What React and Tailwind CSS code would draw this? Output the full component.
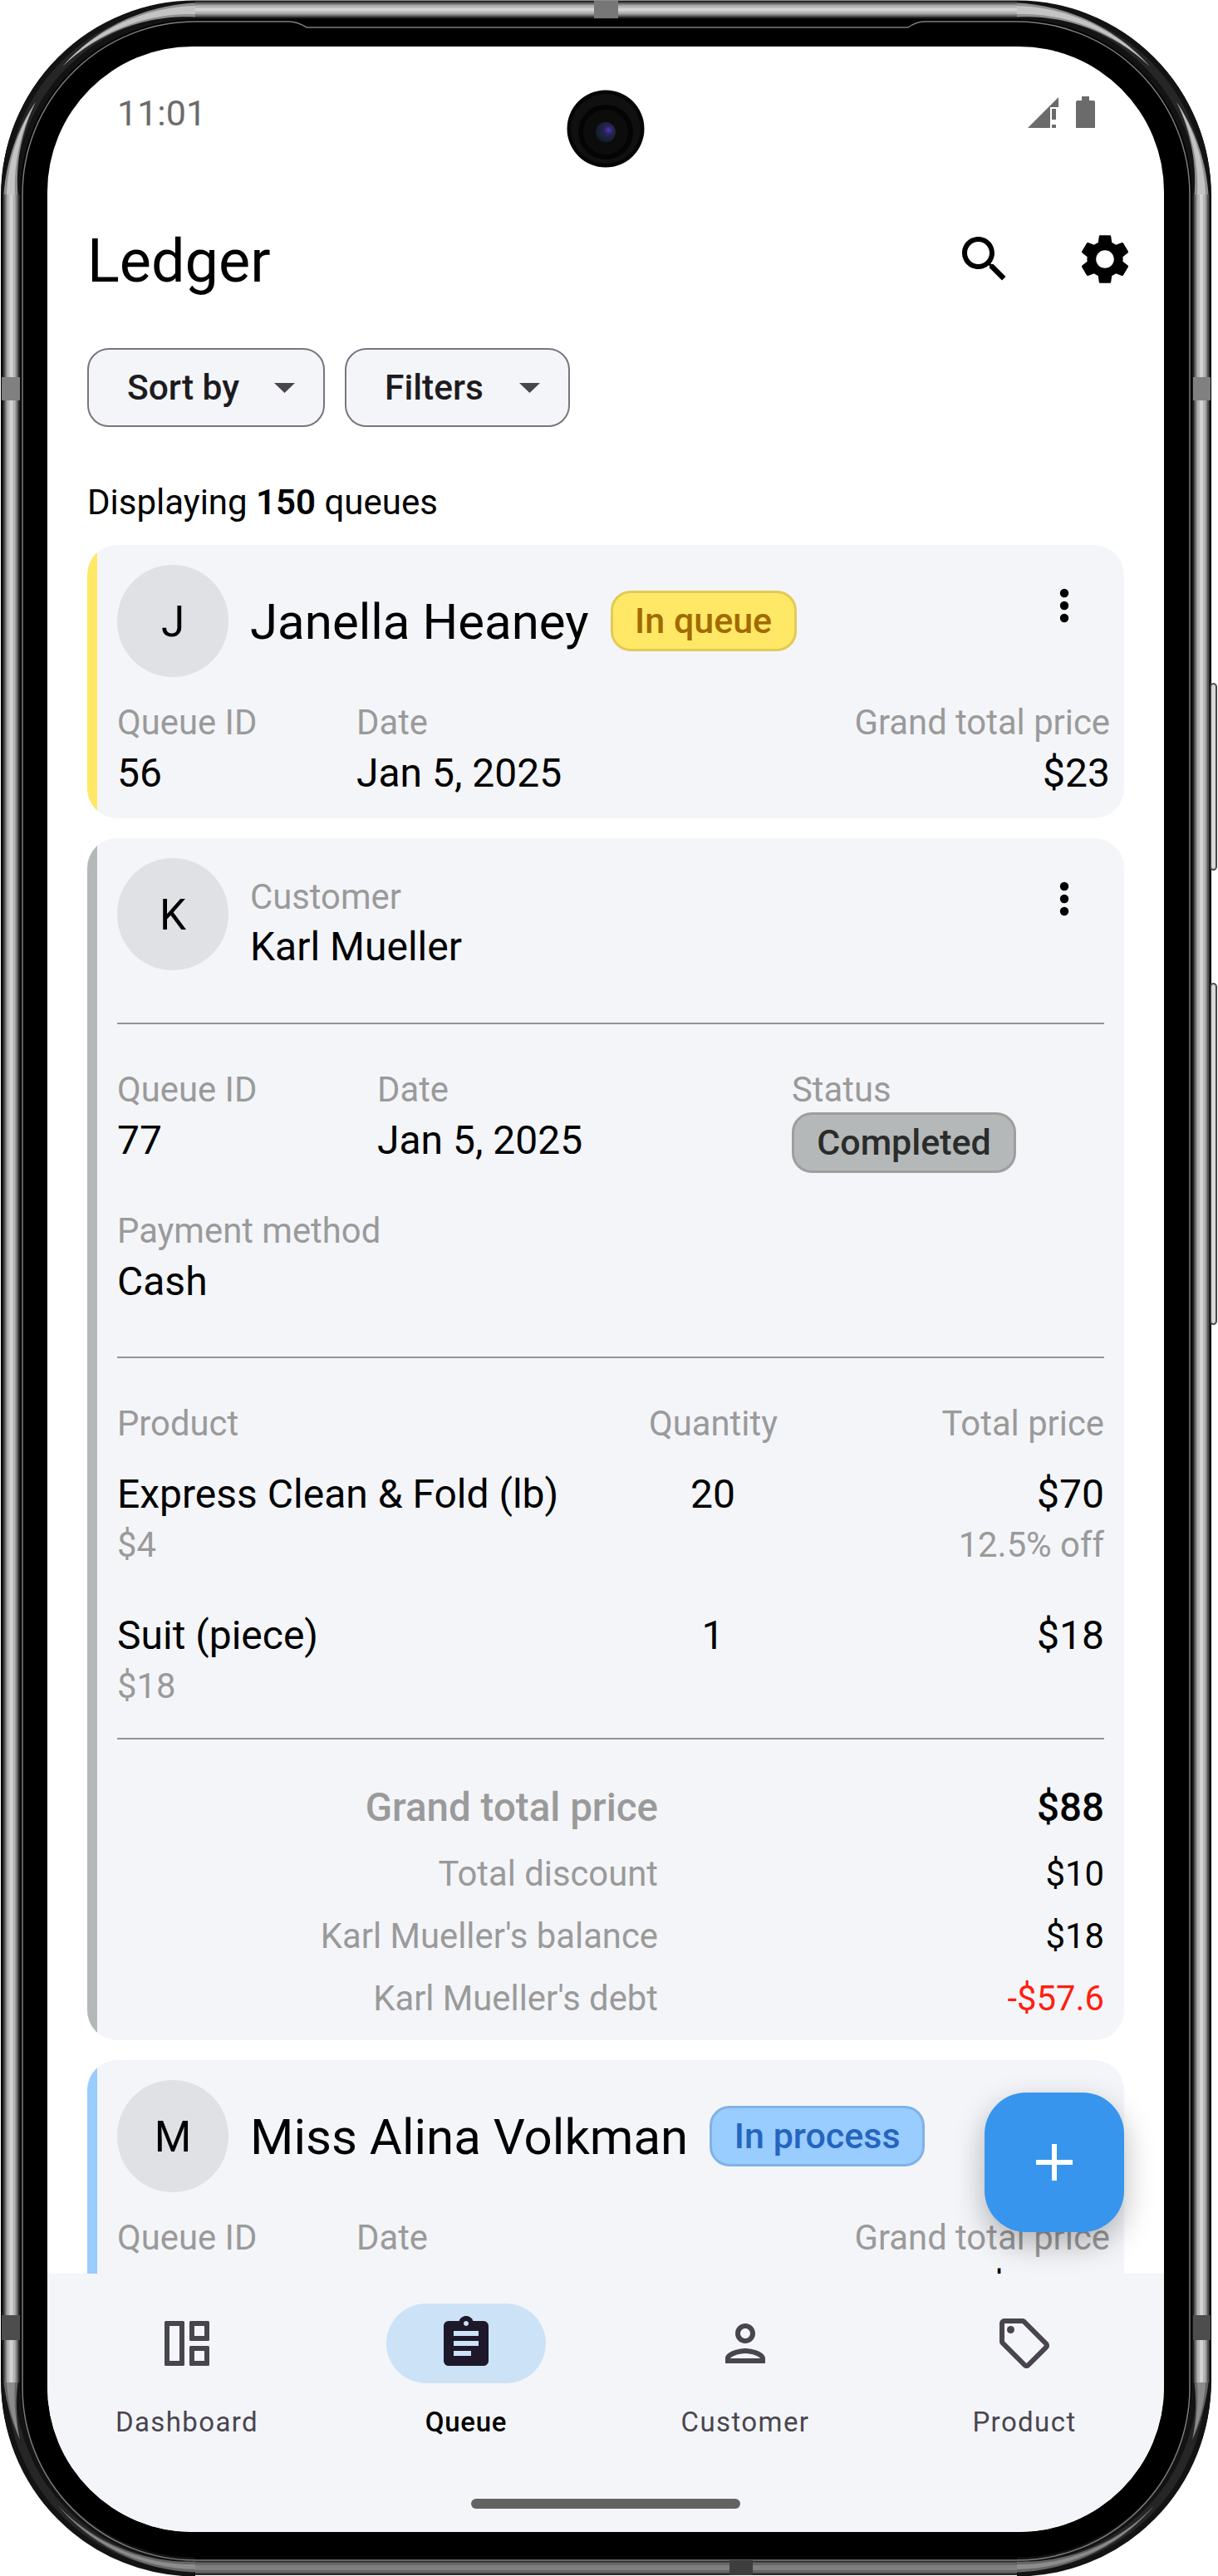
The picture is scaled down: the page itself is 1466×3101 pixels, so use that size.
import React from "react";

const LABEL = "text-[41.8px] leading-[48px] text-[#9a9a9a]";
const VALUE = "text-[48px] leading-[56px] text-black";

// tapered arc, used for the light streaks on the phone's corners
function streak(cx, cy, r, a0, a1, w0, w1, pos) {
  const outer = [];
  const inner = [];
  for (let i = 0; i <= 32; i++) {
    const t = i / 32;
    const a = ((a0 + (a1 - a0) * t) * Math.PI) / 180;
    const w = (w0 + (w1 - w0) * t) / 2;
    const sx = pos[0] * Math.sin(a);
    const sy = pos[1] * Math.cos(a);
    outer.push(`${cx + (r + w) * sx},${cy + (r + w) * sy}`);
    inner.unshift(`${cx + (r - w) * sx},${cy + (r - w) * sy}`);
  }
  return outer.concat(inner).join(" ");
}

const CORNERS = [
  { cx: 235, cy: 234, pos: [-1, -1], arcs: [[0, 46], [90, 60]], colors: ["#8f8f8f", "#c4c4c4"] },
  { cx: 1224, cy: 234, pos: [1, -1], arcs: [[0, 46], [90, 60]], colors: ["#8f8f8f", "#c4c4c4"] },
  { cx: 235, cy: 2868, pos: [-1, 1], arcs: [[90, 72], [0, 48]], colors: ["#666666", "#8c8c8c"] },
  { cx: 1224, cy: 2868, pos: [1, 1], arcs: [[90, 72], [0, 48]], colors: ["#666666", "#8c8c8c"] },
];

const BAND = [
  [22, "#1c1c1c"],
  [18, "#555555"],
  [14, "#8a8a8a"],
  [10, "#b4b4b4"],
  [4, "#d2d2d2"],
];
const BAND_BOTTOM = [
  [18, "#2a2a2a"],
  [13, "#666666"],
  [6, "#808080"],
];

function PhoneBody() {
  const side = (x1, y1, x2, y2, stack) =>
    stack.map(([w, c]) => <line key={`${x1}${y1}${w}`} x1={x1} y1={y1} x2={x2} y2={y2} stroke={c} strokeWidth={w} />);
  return (
    <svg className="absolute inset-0" width="1466" height="3101" viewBox="0 0 1466 3101" fill="none">
      <rect x="1457" y="823" width="7" height="224" rx="4" fill="#d8d8d8" stroke="#4a4a4a" strokeWidth="2" />
      <rect x="1457" y="1184" width="7" height="410" rx="4" fill="#d8d8d8" stroke="#4a4a4a" strokeWidth="2" />
      {side(13.5, 234, 13.5, 2868, BAND)}
      {side(1446, 234, 1446, 2868, BAND)}
      {side(235, 11.5, 1224, 11.5, BAND)}
      {side(235, 3091, 1224, 3091, BAND_BOTTOM)}
      {CORNERS.map((c, i) => {
        const sweep = c.pos[0] * c.pos[1] > 0 ? 1 : 0;
        const sx = c.cx + c.pos[0] * 222;
        const ex = c.cx;
        const sy = c.cy;
        const ey = c.cy + c.pos[1] * 222;
        return (
          <g key={i}>
            <path d={`M${sx} ${sy}A222 222 0 0 ${sweep} ${ex} ${ey}`} stroke="#131313" strokeWidth="23" />
            <path d={`M${sx} ${sy}A222 222 0 0 ${sweep} ${ex} ${ey}`} stroke="#262626" strokeWidth="10" />
            {c.arcs.map(([a0, a1]) => (
              <g key={a0}>
                <polygon points={streak(c.cx, c.cy, 222, a0, a1, a0 === 0 && i > 1 ? 13 : 17, 0, c.pos)} fill={c.colors[0]} />
                <polygon points={streak(c.cx, c.cy, 222, a0, a1, a0 === 0 && i > 1 ? 6 : 10, 0, c.pos)} fill={c.colors[1]} />
              </g>
            ))}
          </g>
        );
      })}
      <path
        d="M27 234A208 208 0 0 1 235 26L348 26Q358 26 369 33L1093 33Q1103 26 1112 26L1224 26A208 208 0 0 1 1432 234L1432 2874A208 208 0 0 1 1224 3082L235 3082A208 208 0 0 1 27 2874Z"
        stroke="#7d7d7d"
        strokeWidth="1.5"
      />
      <rect x="715" y="1" width="29" height="21" fill="#777777" />
      <rect x="2" y="454" width="22" height="28" fill="#808080" />
      <rect x="1436" y="454" width="21" height="28" fill="#808080" />
      <rect x="2" y="2787" width="22" height="30" fill="#4d4d4d" />
      <rect x="1436" y="2787" width="21" height="30" fill="#4d4d4d" />
      <rect x="878" y="3082" width="28" height="18" fill="#3d3d3d" />
    </svg>
  );
}

function Camera() {
  return (
    <svg className="absolute left-[625px] top-[52px]" width="94" height="94" viewBox="0 0 94 94">
      <defs>
        <radialGradient id="lens" cx="65%" cy="40%" r="65%">
          <stop offset="0%" stopColor="#4a35c8" />
          <stop offset="35%" stopColor="#2a2350" />
          <stop offset="100%" stopColor="#0d2028" />
        </radialGradient>
      </defs>
      <circle cx="47" cy="47" r="46.5" fill="#050505" />
      <circle cx="47" cy="47" r="42" fill="#101010" />
      <circle cx="47" cy="51" r="33" fill="#040404" />
      <circle cx="47" cy="51" r="27" fill="#0c0c0c" />
      <circle cx="47" cy="51" r="12" fill="url(#lens)" />
    </svg>
  );
}

function Dots() {
  return (
    <svg width="60" height="60" viewBox="0 0 60 60" fill="#000">
      <circle cx="30" cy="15" r="5.2" />
      <circle cx="30" cy="30" r="5.2" />
      <circle cx="30" cy="45" r="5.2" />
    </svg>
  );
}

function Avatar({ letter }) {
  return (
    <div className="w-[134px] h-[135px] rounded-full bg-[#e0e1e5] flex items-center justify-center pt-1 text-[51px] text-black shrink-0">
      {letter}
    </div>
  );
}

function Badge({ children, className }) {
  return (
    <div className={`h-[73px] rounded-[24px] border-[3px] flex items-center justify-center text-[43px] font-medium ${className}`}>
      {children}
    </div>
  );
}

function Caret() {
  return (
    <svg width="25" height="12" viewBox="0 0 25 12" fill="#49454f">
      <path d="M0 0h25L12.5 12z" />
    </svg>
  );
}

function CardShell({ bar, children }) {
  return (
    <div className="flex rounded-[36px] overflow-hidden bg-[#f4f5f9] shrink-0">
      <div className={`w-3 shrink-0 ${bar}`} />
      <div className="flex-1 min-w-0">{children}</div>
    </div>
  );
}

function CompactCard({ bar, letter, name, badge, id, total }) {
  return (
    <CardShell bar={bar}>
      <div className="pl-6 pr-[17px] pt-6 pb-[26px]">
        <div className="flex items-center h-[135px]">
          <Avatar letter={letter} />
          <div className="ml-[26px] pt-[3px] text-[60px] leading-[70px] text-black whitespace-nowrap">{name}</div>
          {badge}
          <div className="ml-auto mr-[25px] self-start mt-[19px]">
            <Dots />
          </div>
        </div>
        <div className="mt-[31px] flex">
          <div className="w-[288px]">
            <div className={LABEL}>Queue ID</div>
            <div className={`${VALUE} mt-[9px]`}>{id}</div>
          </div>
          <div>
            <div className={LABEL}>Date</div>
            <div className={`${VALUE} mt-[9px]`}>Jan 5, 2025</div>
          </div>
          <div className="ml-auto text-right">
            <div className={LABEL}>Grand total price</div>
            <div className={`${VALUE} mt-[9px]`}>{total}</div>
          </div>
        </div>
      </div>
    </CardShell>
  );
}

function ExpandedCard() {
  return (
    <CardShell bar="bg-[#b5b8b8]">
      <div className="pl-6 pr-6 pt-6 pb-[26px]">
        <div className="flex items-start">
          <Avatar letter="K" />
          <div className="ml-[26px] mt-[23px]">
            <div className={LABEL}>Customer</div>
            <div className={`${VALUE} mt-2`}>Karl Mueller</div>
          </div>
          <div className="ml-auto mr-[18px] mt-[19px]">
            <Dots />
          </div>
        </div>
        <div className="mt-[63px] h-0.5 bg-[#949494]" />

        <div className="mt-[55px] grid grid-cols-[313px_499px_1fr]">
          <div>
            <div className={LABEL}>Queue ID</div>
            <div className={`${VALUE} mt-[9px]`}>77</div>
          </div>
          <div>
            <div className={LABEL}>Date</div>
            <div className={`${VALUE} mt-[9px]`}>Jan 5, 2025</div>
          </div>
          <div>
            <div className={LABEL}>Status</div>
            <Badge className="mt-[3px] w-[270px] bg-[#b5b8b8] border-[#9d9f9f] text-[#2a2c2c]">Completed</Badge>
          </div>
        </div>
        <div className="mt-[46px]">
          <div className={LABEL}>Payment method</div>
          <div className={`${VALUE} mt-[9px]`}>Cash</div>
        </div>
        <div className="mt-[62px] h-0.5 bg-[#949494]" />

        <div className="mt-[55px] grid grid-cols-[640px_154px_1fr]">
          <div className={LABEL}>Product</div>
          <div className={`${LABEL} text-center`}>Quantity</div>
          <div className={`${LABEL} text-right`}>Total price</div>
        </div>
        <div className="mt-[33px] grid grid-cols-[640px_154px_1fr]">
          <div className={VALUE}>Express Clean &amp; Fold (lb)</div>
          <div className={`${VALUE} text-center`}>20</div>
          <div className={`${VALUE} text-right`}>$70</div>
        </div>
        <div className="mt-[9px] flex justify-between">
          <div className={LABEL}>$4</div>
          <div className={LABEL}>12.5% off</div>
        </div>
        <div className="mt-[57px] grid grid-cols-[640px_154px_1fr]">
          <div className={VALUE}>Suit (piece)</div>
          <div className={`${VALUE} text-center`}>1</div>
          <div className={`${VALUE} text-right`}>$18</div>
        </div>
        <div className={`mt-[9px] ${LABEL}`}>$18</div>
        <div className="mt-[38px] h-0.5 bg-[#949494]" />

        <div className="mt-[54px] grid grid-cols-[651px_1fr] text-right">
          <div className="text-[47.5px] leading-[56px] font-medium text-[#9a9a9a]">Grand total price</div>
          <div className="text-[47.5px] leading-[56px] font-medium text-black">$88</div>
        </div>
        <div className="mt-[28px] grid grid-cols-[651px_1fr] text-right">
          <div className={LABEL}>Total discount</div>
          <div className="text-[41.8px] leading-[48px] text-black">$10</div>
        </div>
        <div className="mt-[27px] grid grid-cols-[651px_1fr] text-right">
          <div className={LABEL}>Karl Mueller's balance</div>
          <div className="text-[41.8px] leading-[48px] text-black">$18</div>
        </div>
        <div className="mt-[27px] grid grid-cols-[651px_1fr] text-right">
          <div className={LABEL}>Karl Mueller's debt</div>
          <div className="text-[41.8px] leading-[48px] text-[#ff1e10]">-$57.6</div>
        </div>
      </div>
    </CardShell>
  );
}

function NavIcon({ children, color = "#49454f" }) {
  return (
    <svg width="72" height="72" viewBox="0 0 24 24" fill={color}>
      {children}
    </svg>
  );
}

const NAV = [
  {
    label: "Dashboard",
    icon: (
      <NavIcon>
        <path
          fillRule="evenodd"
          d="M3.5 3h7a.5.5 0 0 1 .5.5v17a.5.5 0 0 1-.5.5h-7a.5.5 0 0 1-.5-.5v-17a.5.5 0 0 1 .5-.5zM5 5v14h4V5zM13.5 3h7a.5.5 0 0 1 .5.5v7a.5.5 0 0 1-.5.5h-7a.5.5 0 0 1-.5-.5v-7a.5.5 0 0 1 .5-.5zM15 5v4h4V5zM13.5 13h7a.5.5 0 0 1 .5.5v7a.5.5 0 0 1-.5.5h-7a.5.5 0 0 1-.5-.5v-7a.5.5 0 0 1 .5-.5zM15 15v4h4v-4z"
        />
      </NavIcon>
    ),
  },
  {
    label: "Queue",
    active: true,
    icon: (
      <NavIcon color="#1d192b">
        <path d="M19 3h-4.18C14.4 1.84 13.3 1 12 1c-1.3 0-2.4.84-2.82 2H5c-1.1 0-2 .9-2 2v14c0 1.1.9 2 2 2h14c1.1 0 2-.9 2-2V5c0-1.1-.9-2-2-2zm-7 0c.55 0 1 .45 1 1s-.45 1-1 1-1-.45-1-1 .45-1 1-1zm2 14H7v-2h7v2zm3-4H7v-2h10v2zm0-4H7V7h10v2z" />
      </NavIcon>
    ),
  },
  {
    label: "Customer",
    icon: (
      <NavIcon>
        <path d="M12 6c1.1 0 2 .9 2 2s-.9 2-2 2-2-.9-2-2 .9-2 2-2m0 10c2.7 0 5.8 1.29 6 2H6c.23-.72 3.31-2 6-2m0-12C9.79 4 8 5.79 8 8s1.79 4 4 4 4-1.79 4-4-1.79-4-4-4zm0 10c-2.67 0-8 1.34-8 4v2h16v-2c0-2.66-5.33-4-8-4z" />
      </NavIcon>
    ),
  },
  {
    label: "Product",
    icon: (
      <NavIcon>
        <path d="M21.41 11.41l-8.83-8.83c-.37-.37-.88-.58-1.41-.58H4c-1.1 0-2 .9-2 2v7.17c0 .53.21 1.04.59 1.41l8.83 8.83c.78.78 2.05.78 2.83 0l7.17-7.17c.78-.78.78-2.04-.01-2.83zM12.83 20L4 11.17V4h7.17L20 12.83 12.83 20z" />
        <circle cx="6.5" cy="6.5" r="1.5" />
      </NavIcon>
    ),
  },
];

export default function App() {
  return (
    <div className="relative w-[1466px] h-[3101px] bg-white pl-px pt-px font-[family-name:Roboto,sans-serif] overflow-hidden">
      {/* Phone body */}
      <div className="w-[1457px] h-[3099px] rounded-[235px] bg-black pl-[56px] pt-[55px]">
        {/* Screen */}
        <div className="relative w-[1344px] h-[2992px] rounded-[175px] overflow-hidden bg-white flex flex-col">
          <Camera />

          {/* Status bar */}
          <div className="h-[220px] shrink-0 pl-[84px] pr-[83px] pt-[59px] flex items-start justify-between">
            <div className="text-[43px] leading-[42px] text-[#6b6b6b]">11:01</div>
            <svg width="84" height="40" viewBox="0 0 84 40" fill="#6b6b6b">
              <path d="M3 39L30 12v27zM30 12L40 2v12H30z" />
              <path d="M32 16h5v13h-5zM32 35h5v4h-5z" />
              <path d="M61 39V8a2 2 0 0 1 2-2h5V1h9v5h5a2 2 0 0 1 2 2v31z" />
            </svg>
          </div>

          {/* Header */}
          <div className="h-[72px] shrink-0 pl-12 pr-[35px] flex items-center">
            <div className="text-[72px] leading-[72px] text-black pt-[6px]">Ledger</div>
            <div className="ml-auto flex gap-[73px]">
              <svg width="72" height="72" viewBox="0 0 24 24" fill="#000">
                <path d="M15.5 14h-.79l-.28-.27C15.41 12.59 16 11.11 16 9.5 16 5.91 13.09 3 9.5 3S3 5.91 3 9.5 5.91 16 9.5 16c1.61 0 3.09-.59 4.23-1.57l.27.28v.79l5 4.99L20.49 19l-4.99-5zm-6 0C7.01 14 5 11.99 5 9.5S7.01 5 9.5 5 14 7.01 14 9.5 11.99 14 9.5 14z" />
              </svg>
              <svg width="72" height="72" viewBox="0 0 24 24" fill="#000">
                <path d="M19.14 12.94c.04-.3.06-.61.06-.94 0-.32-.02-.64-.07-.94l2.03-1.58c.18-.14.23-.41.12-.61l-1.92-3.32c-.12-.22-.37-.29-.59-.22l-2.39.96c-.5-.38-1.03-.7-1.62-.94l-.36-2.54c-.04-.24-.24-.41-.48-.41h-3.84c-.24 0-.43.17-.47.41l-.36 2.54c-.59.24-1.13.57-1.62.94l-2.39-.96c-.22-.08-.47 0-.59.22L2.74 8.87c-.12.21-.08.47.12.61l2.03 1.58c-.05.3-.09.63-.09.94s.02.64.07.94l-2.03 1.58c-.18.14-.23.41-.12.61l1.92 3.32c.12.22.37.29.59.22l2.39-.96c.5.38 1.03.7 1.62.94l.36 2.54c.05.24.24.41.48.41h3.84c.24 0 .44-.17.47-.41l.36-2.54c.59-.24 1.13-.56 1.62-.94l2.39.96c.22.08.47 0 .59-.22l1.92-3.32c.12-.22.07-.47-.12-.61l-2.01-1.58zM12 15.6c-1.98 0-3.6-1.62-3.6-3.6s1.62-3.6 3.6-3.6 3.6 1.62 3.6 3.6-1.62 3.6-3.6 3.6z" />
              </svg>
            </div>
          </div>

          {/* Sort and filter */}
          <div className="mt-[71px] shrink-0 pl-12 flex gap-6">
            <div className="h-[95px] w-[286px] pl-[46px] pr-[34px] rounded-[26px] border-2 border-[#79747e] bg-[#f4f5f9] flex items-center justify-between text-[42.5px] font-medium text-[#1d1b20]">
              Sort by
              <Caret />
            </div>
            <div className="h-[95px] w-[271px] pl-[46px] pr-[34px] rounded-[26px] border-2 border-[#79747e] bg-[#f4f5f9] flex items-center justify-between text-[42.5px] font-medium text-[#1d1b20]">
              Filters
              <Caret />
            </div>
          </div>

          <div className="mt-[67px] shrink-0 pl-12 text-[42px] leading-[48px] text-black">
            Displaying <span className="font-semibold">150</span> queues
          </div>

          {/* Queue list */}
          <div className="relative flex-1 min-h-0 mt-[27px]">
            <div className="h-full overflow-hidden pl-12 pr-12 flex flex-col gap-6">
              <CompactCard
                bar="bg-[#ffe866]"
                letter="J"
                name="Janella Heaney"
                id="56"
                total="$23"
                badge={
                  <Badge className="ml-[26px] w-[224px] bg-[#ffe866] border-[#e3ca57] text-[#a26a00]">In queue</Badge>
                }
              />
              <ExpandedCard />
              <CompactCard
                bar="bg-[#99ccff]"
                letter="M"
                name="Miss Alina Volkman"
                id="91"
                total="$125.5"
                badge={
                  <Badge className="ml-[26px] w-[259px] bg-[#99ccff] border-[#7fb2e5] text-[#2565be]">In process</Badge>
                }
              />
            </div>
            <button className="absolute right-12 bottom-[50px] w-[168px] h-[168px] rounded-[50px] bg-[#3795ed] flex items-center justify-center shadow-[0_14px_36px_rgba(0,0,0,0.28)]">
              <svg width="44" height="44" viewBox="0 0 44 44" fill="#fff">
                <path d="M19 0h6v19h19v6H25v19h-6V25H0v-6h19z" />
              </svg>
            </button>
          </div>

          {/* Bottom navigation */}
          <div className="h-[311px] shrink-0 bg-[#f4f5f9] pt-9">
            <div className="flex">
              {NAV.map((item) => (
                <div key={item.label} className="flex-1 flex flex-col items-center">
                  <div className={`w-[192px] h-[96px] rounded-full flex items-center justify-center ${item.active ? "bg-[#cce2f6]" : ""}`}>
                    {item.icon}
                  </div>
                  <div className={`mt-[27px] text-[33px] leading-[40px] ${item.active ? "font-medium text-black tracking-[0.7px]" : "tracking-[1.4px] text-[#49454f]"}`}>
                    {item.label}
                  </div>
                </div>
              ))}
            </div>
            <div className="mt-[72px] mx-auto w-[324px] h-3 rounded-full bg-[#636363]" />
          </div>
        </div>
      </div>
      <PhoneBody />
    </div>
  );
}
